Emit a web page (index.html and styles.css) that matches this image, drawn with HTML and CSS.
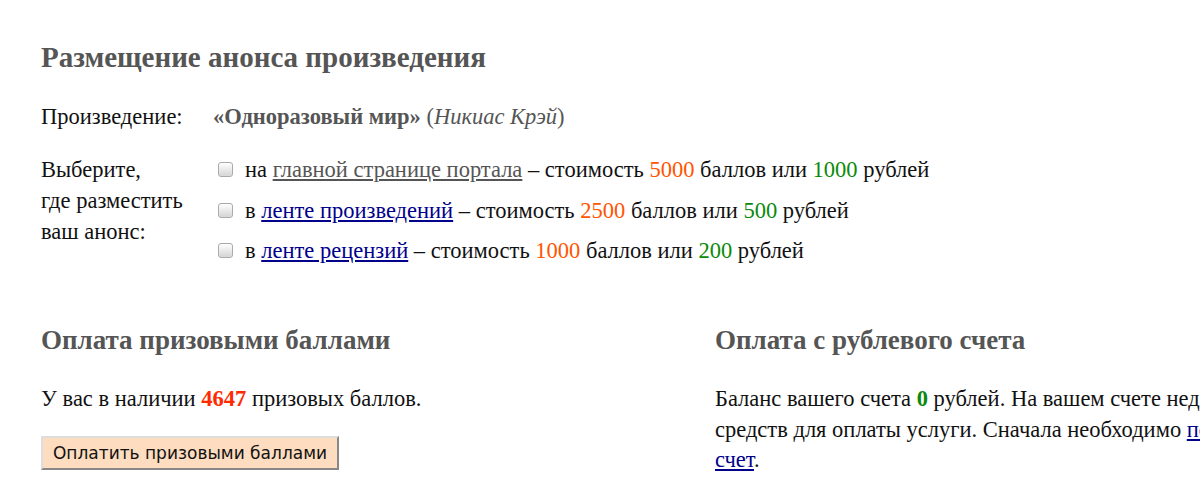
FILE: index.html
```html
<!DOCTYPE html>
<html lang="ru">
<head>
<meta charset="utf-8">
<title>Размещение анонса произведения</title>
<link rel="stylesheet" href="styles.css">
</head>
<body>
<div class="page">
  <h1 class="title">Размещение анонса произведения</h1>
  <div class="form">
    <div class="label">Произведение:</div>
    <div class="value work"><b class="work-name">«Одноразовый мир»</b> (<i class="author">Никиас Крэй</i>)</div>
    <div class="label choose">Выберите,<br>где разместить<br>ваш анонс:</div>
    <div class="value options">
      <label class="opt"><span class="box"></span>на <a class="link gray" href="#">главной странице портала</a> – стоимость <span class="pts">5000</span> баллов или <span class="rub">1000</span> рублей</label>
      <label class="opt"><span class="box"></span>в <a class="link" href="#">ленте произведений</a> – стоимость <span class="pts">2500</span> баллов или <span class="rub">500</span> рублей</label>
      <label class="opt"><span class="box"></span>в <a class="link" href="#">ленте рецензий</a> – стоимость <span class="pts">1000</span> баллов или <span class="rub">200</span> рублей</label>
    </div>
  </div>
  <div class="pay">
    <div class="pay-col left">
      <h2 class="sub">Оплата призовыми баллами</h2>
      <p class="text">У вас в наличии <b class="have">4647</b> призовых баллов.</p>
      <button class="btn" type="button">Оплатить призовыми баллами</button>
    </div>
    <div class="pay-col right">
      <h2 class="sub">Оплата с рублевого счета</h2>
      <p class="text">Баланс вашего счета <b class="zero">0</b> рублей. На вашем счете недостаточно средств для оплаты услуги. Сначала необходимо <a class="link" href="#">пополнить счет</a>.</p>
    </div>
  </div>
</div>
</body>
</html>
```

FILE: styles.css
```css
html, body {
  margin: 0;
  padding: 0;
  background: #fff;
  overflow: hidden;
}
body {
  font-family: "Liberation Serif", "Times New Roman", serif;
  font-size: 22.5px;
  color: #111;
}
.page {
  width: 1400px;
  padding: 37px 0 0 41px;
}
.title {
  margin: 0;
  font-size: 29px;
  font-weight: bold;
  color: #555;
  line-height: 40px;
}
.form {
  display: grid;
  grid-template-columns: 172px auto;
  row-gap: 12px;
  margin-top: 24px;
}
.label, .value {
  line-height: 31px;
}
.work { color: #555; }
.work-name { font-weight: bold; color: #555; }
.author { color: #555; }
.choose { margin-top: 10px; }
.options {
  display: flex;
  flex-direction: column;
  gap: 9.5px;
  margin-top: 10px;
}
.opt {
  display: flex;
  align-items: center;
  white-space: pre;
  line-height: 31px;
}
.box {
  width: 13px;
  height: 13px;
  border: 1px solid #aaa;
  border-radius: 3px;
  background: linear-gradient(#fff, #d4d4d4);
  margin: 0 12px 0 5px;
  box-shadow: inset 0 0 1px #fff;
}
.link { color: #00008b; text-decoration: underline; }
.link.gray { color: #555; }
.pts { color: #ff5500; }
.rub { color: #0a8a0a; }
.pay {
  display: grid;
  grid-template-columns: 674px 600px;
  margin-top: 56px;
}
.sub {
  margin: 0;
  font-size: 27px;
  font-weight: bold;
  color: #555;
  line-height: 36px;
}
.text {
  margin: 26px 0 0;
  line-height: 30.5px;
}
.have { color: #ff2a00; }
.zero { color: #0a8a0a; }
.btn {
  display: block;
  margin-top: 21px;
  font-family: "DejaVu Sans", Verdana, sans-serif;
  font-size: 17px;
  color: #111;
  background: #fddcbf;
  border: 2px solid;
  border-color: #ddd #888 #888 #ddd;
  padding: 0 8px;
  height: 34px;
  width: 298px;
}
```
